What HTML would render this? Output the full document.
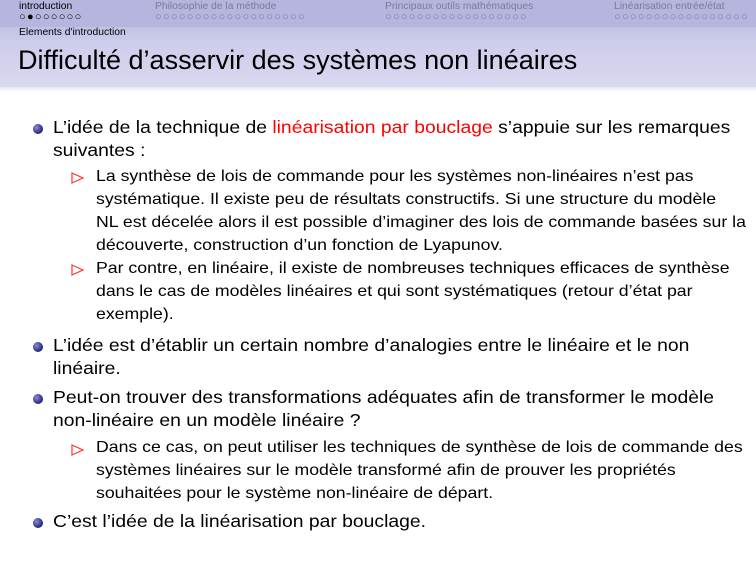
<!DOCTYPE html>
<html><head><meta charset="utf-8"><style>
body{margin:0;width:756px;height:567px;overflow:hidden;background:#fff;font-family:"Liberation Sans",sans-serif;position:relative}
.top{position:absolute;left:0;top:0;width:756px;height:27px;background:#b5b5de}
.sub{position:absolute;left:0;top:27px;width:756px;height:13px;background:linear-gradient(#c2c2e6,#cacaea)}
.tb{position:absolute;left:0;top:40px;width:756px;height:47px;background:linear-gradient(#cdcdec,#d8d8f0)}
.sh{position:absolute;left:0;top:87px;width:756px;height:5px;background:linear-gradient(#e6e6f2,#fff)}
.s{position:absolute;font-size:10.3px;color:#7a7a9e;white-space:nowrap}
.d{position:absolute;font-size:11px;letter-spacing:1.3px;color:#7a7a9e;white-space:nowrap}
.t{position:absolute;white-space:nowrap;color:#000;transform-origin:0 0}
.m{font-size:17.5px;transform:scaleX(1.105)}.n{font-size:16px;transform:scaleX(1.105)}
.b{position:absolute;width:10px;height:10px;border-radius:50%;background:radial-gradient(circle at 35% 35%,#8a8ad8,#23237a 70%)}
</style></head><body>
<div class="top"></div><div class="sub"></div><div class="tb"></div><div class="sh"></div>
<div class="s" style="left:19px;top:1px;color:#000">introduction</div>
<div class="d" style="left:19px;top:11px;color:#000">○●○○○○○○</div>
<div class="s" style="left:155px;top:1px">Philosophie de la méthode</div>
<div class="d" style="left:155px;top:11px">○○○○○○○○○○○○○○○○○○○</div>
<div class="s" style="left:385px;top:1px">Principaux outils mathématiques</div>
<div class="d" style="left:385px;top:11px">○○○○○○○○○○○○○○○○○○</div>
<div class="s" style="left:614px;top:1px">Linéarisation entrée/état</div>
<div class="d" style="left:614px;top:11px">○○○○○○○○○○○○○○○○○</div>
<div class="s" style="left:19px;top:27px;color:#000">Elements d'introduction</div>
<div class="t" style="left:18px;top:45px;font-size:27px">Difficulté d’asservir des systèmes non linéaires</div>

<div class="b" style="left:33px;top:124px"></div>
<div class="t m" style="left:53px;top:117px">L’idée de la technique de <span style="color:#f00">linéarisation par bouclage</span> s’appuie sur les remarques</div>
<div class="t m" style="left:53px;top:140px">suivantes :</div>
<svg style="position:absolute;left:71px;top:172px" width="14" height="12"><path d="M1 1 L12 6 L1 11 Z" fill="none" stroke="#f33" stroke-width="1.2"/></svg>
<div class="t n" style="left:96px;top:168px">La synthèse de lois de commande pour les systèmes non-linéaires n’est pas</div>
<div class="t n" style="left:96px;top:191px">systématique. Il existe peu de résultats constructifs. Si une structure du modèle</div>
<div class="t n" style="left:96px;top:214px">NL est décelée alors il est possible d’imaginer des lois de commande basées sur la</div>
<div class="t n" style="left:96px;top:237px">découverte, construction d’un fonction de Lyapunov.</div>
<svg style="position:absolute;left:71px;top:264px" width="14" height="12"><path d="M1 1 L12 6 L1 11 Z" fill="none" stroke="#f33" stroke-width="1.2"/></svg>
<div class="t n" style="left:96px;top:260px">Par contre, en linéaire, il existe de nombreuses techniques efficaces de synthèse</div>
<div class="t n" style="left:96px;top:283px">dans le cas de modèles linéaires et qui sont systématiques (retour d’état par</div>
<div class="t n" style="left:96px;top:306px">exemple).</div>

<div class="b" style="left:33px;top:342px"></div>
<div class="t m" style="left:53px;top:335px">L’idée est d’établir un certain nombre d’analogies entre le linéaire et le non</div>
<div class="t m" style="left:53px;top:358px">linéaire.</div>
<div class="b" style="left:33px;top:394px"></div>
<div class="t m" style="left:53px;top:387px">Peut-on trouver des transformations adéquates afin de transformer le modèle</div>
<div class="t m" style="left:53px;top:410px">non-linéaire en un modèle linéaire ?</div>
<svg style="position:absolute;left:71px;top:444px" width="14" height="12"><path d="M1 1 L12 6 L1 11 Z" fill="none" stroke="#f33" stroke-width="1.2"/></svg>
<div class="t n" style="left:96px;top:439px">Dans ce cas, on peut utiliser les techniques de synthèse de lois de commande des</div>
<div class="t n" style="left:96px;top:462px">systèmes linéaires sur le modèle transformé afin de prouver les propriétés</div>
<div class="t n" style="left:96px;top:485px">souhaitées pour le système non-linéaire de départ.</div>
<div class="b" style="left:33px;top:518px"></div>
<div class="t m" style="left:53px;top:511px">C’est l’idée de la linéarisation par bouclage.</div>
</body></html>
